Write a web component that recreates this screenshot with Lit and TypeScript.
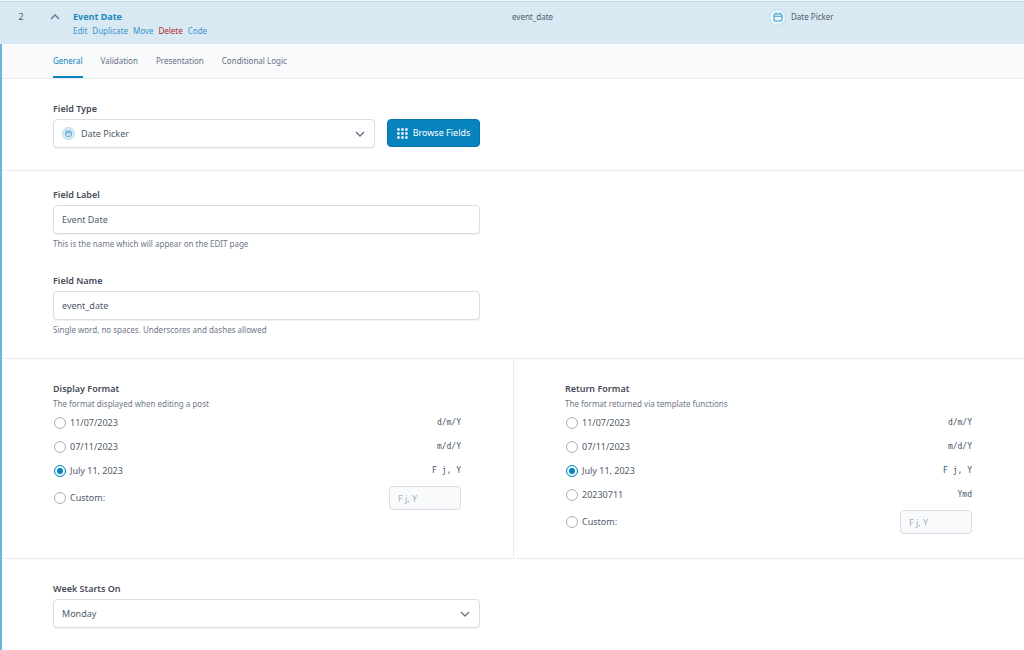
import { LitElement, html, svg, css } from "lit";
import { customElement, property, state } from "lit/decorators.js";

const calendar = svg`<path d="M4.500 4h11A2.500 2.500 0 0 1 18 6.500v9a2.500 2.500 0 0 1-2.500 2.500h-11A2.500 2.500 0 0 1 2 15.500v-9A2.500 2.500 0 0 1 4.500 4zM2 8.500h16M6 1v4M14 1v4" fill="none" stroke="currentColor" stroke-width="2.200"/>`;

@customElement("field-icon")
export class FieldIcon extends LitElement {
  static styles = css`
    :host {
      display: grid;
      place-items: center;
      box-sizing: border-box;
      width: 17px;
      height: 17px;
      border: 1px solid #b5dcec;
      border-radius: 50%;
      background: #ebf5fa;
      color: #3a9ccb;
    }
    :host([small]) {
      width: 13px;
      height: 13px;
      background: #d8ebf5;
    }
    svg {
      display: block;
      width: 10px;
      height: 10px;
    }
    :host([small]) svg {
      width: 7px;
      height: 7px;
    }
  `;

  render() {
    return html`<svg viewBox="0 0 20 20" aria-hidden="true">${calendar}</svg>`;
  }
}

interface FormatOption {
  label: string;
  code: string;
}

@customElement("format-group")
export class FormatGroup extends LitElement {
  @property() heading = "";
  @property() hint = "";
  @property() name = "";
  @property({ attribute: false }) options: FormatOption[] = [];
  @state() private selected = "F j, Y";

  static styles = css`
    :host {
      display: block;
    }
    fieldset {
      margin: 0;
      padding: 0;
      border: 0;
      min-width: 0;
    }
    legend {
      padding: 0;
      font-weight: 600;
      line-height: 14px;
      color: #474b57;
    }
    .hint {
      margin: 0;
      padding: 1px 0 0;
      font-size: 8px;
      line-height: 14px;
      color: #6f7888;
    }
    .list {
      display: grid;
      margin: 0;
      padding: 0;
      list-style: none;
    }
    .row {
      display: flex;
      align-items: center;
      height: 24px;
    }
    .custom {
      margin-top: 3px;
    }
    .choice {
      display: flex;
      flex: 1;
      align-items: center;
      gap: 4px;
    }
    .radio {
      appearance: none;
      display: grid;
      place-items: center;
      box-sizing: border-box;
      width: 12px;
      height: 12px;
      margin: 0 0 0 1px;
      border: 1px solid #a8b0bd;
      border-radius: 50%;
      background: #fff;
    }
    .radio:checked {
      border-color: #0783be;
      background: #ebf5fa;
    }
    .radio:checked::before {
      content: "";
      width: 6px;
      height: 6px;
      border-radius: 50%;
      background: #0783be;
    }
    .code {
      font-family: "DejaVu Sans Mono", monospace;
      font-size: 8px;
      color: #475467;
    }
    .text {
      box-sizing: border-box;
      width: 72px;
      height: 24px;
      padding: 0 8px;
      border: 1px solid #d8dde6;
      border-radius: 4px;
      background: #f9fafb;
      font: inherit;
      color: #a5aebd;
    }
  `;

  render() {
    return html`
      <fieldset>
        <legend>${this.heading}</legend>
        <p class="hint">${this.hint}</p>
        <ul class="list">
          ${this.options.map(
            (o) => html`<li class="row">
              <label class="choice">
                <input
                  class="radio"
                  type="radio"
                  name=${this.name}
                  .checked=${this.selected === o.code}
                  @change=${() => (this.selected = o.code)}
                />
                ${o.label}
              </label>
              <code class="code">${o.code}</code>
            </li>`
          )}
          <li class="row custom">
            <label class="choice">
              <input
                class="radio"
                type="radio"
                name=${this.name}
                .checked=${this.selected === "custom"}
                @change=${() => (this.selected = "custom")}
              />
              Custom:
            </label>
            <input
              class="text"
              type="text"
              aria-label="Custom format"
              .value=${"F j, Y"}
              ?disabled=${this.selected !== "custom"}
            />
          </li>
        </ul>
      </fieldset>
    `;
  }
}

@customElement("app-root")
export class AppRoot extends LitElement {
  @state() private tab = "General";

  static styles = css`
    :host {
      display: flex;
      flex-direction: column;
      box-sizing: border-box;
      min-height: 100vh;
      padding-top: 1px;
      background: #eef5fa;
      font-family: "Noto Sans", "Open Sans", sans-serif;
      font-size: 9px;
      line-height: 14px;
      color: #515a6b;
    }
    a {
      color: #3a94c8;
      text-decoration: none;
    }
    .head {
      display: grid;
      grid-template-columns: 2fr 1fr 1fr;
      align-items: start;
      padding: 8px 0 6px;
      border-top: 1px solid #b8dcea;
      background: #d8e9f3;
      font-size: 8px;
    }
    .lead {
      display: grid;
      grid-template-columns: 42px 31px 1fr;
    }
    .order {
      font-size: 9px;
      text-align: center;
    }
    .toggle {
      display: block;
      height: 14px;
      margin: 0;
      padding: 0 0 0 8px;
      border: 0;
      background: none;
      text-align: left;
      color: #667085;
    }
    .chevron {
      display: block;
      width: 10px;
      height: 10px;
      fill: none;
      stroke: currentColor;
      stroke-width: 1.300;
    }
    .title {
      display: block;
      font-size: 9px;
      font-weight: 700;
      color: #1c88be;
    }
    .actions {
      display: flex;
      gap: 5px;
    }
    .actions .delete {
      color: #b3262e;
    }
    .type {
      display: flex;
      align-items: center;
      gap: 5px;
      height: 14px;
      padding-left: 1px;
    }
    .body {
      flex: 1;
      border-left: 2px solid #6bb5d8;
      background: #fff;
    }
    .tabs {
      display: flex;
      gap: 18px;
      padding: 0 51px;
      border-bottom: 1px solid #eaecf0;
      background: #f9fafb;
    }
    .tab {
      height: 34px;
      margin: 0;
      padding: 1px 0 0;
      border: 0;
      border-bottom: 2px solid transparent;
      background: none;
      font: inherit;
      font-size: 8px;
      color: #667085;
    }
    .tab[aria-selected="true"] {
      border-color: #0783be;
      color: #0783be;
    }
    .section {
      display: flex;
      flex-direction: column;
      gap: 23px;
      padding: 23px 51px 22px;
    }
    .section + .section,
    .split,
    .split + .section {
      border-top: 1px solid #eaecf0;
    }
    .names {
      padding: 17px 51px 21px;
    }
    .field {
      display: flex;
      flex-direction: column;
      max-width: 427px;
    }
    .label {
      margin-bottom: 3px;
      font-weight: 600;
      color: #474b57;
    }
    .pair {
      display: flex;
      gap: 12px;
    }
    .control {
      display: grid;
      flex: 1;
      align-items: center;
    }
    .control > * {
      grid-area: 1 / 1;
    }
    .input {
      box-sizing: border-box;
      width: 100%;
      height: 29px;
      margin: 0;
      padding: 0 8px;
      border: 1px solid #d8dde6;
      border-radius: 4px;
      background: #fff;
      box-shadow: 0 1px 1px rgba(16, 24, 40, 0.06);
      font: inherit;
      color: #515a6b;
      appearance: none;
    }
    .with-icon {
      padding-left: 27px;
    }
    .mark,
    .arrow {
      z-index: 1;
      pointer-events: none;
    }
    .mark {
      margin-left: 9px;
    }
    .arrow {
      justify-self: end;
      margin-right: 10px;
      color: #667085;
    }
    .browse {
      display: flex;
      align-items: center;
      justify-content: center;
      gap: 5px;
      width: 93px;
      height: 28px;
      margin: 0;
      padding: 0;
      border: 1px solid #0675aa;
      border-radius: 4px;
      background: #0783be;
      font: inherit;
      color: #fff;
    }
    .dots {
      width: 11px;
      height: 11px;
      fill: currentColor;
    }
    .note {
      margin: 3px 0 0;
      font-size: 8px;
      line-height: 14px;
      color: #6f7888;
    }
    .split {
      display: grid;
      grid-template-columns: 1fr 1fr;
    }
    .half {
      padding: 23px 52px 24px 51px;
    }
    .half + .half {
      border-left: 1px solid #eaecf0;
    }
  `;

  private down() {
    return html`<svg class="chevron arrow" viewBox="0 0 10 10" aria-hidden="true">
      <path d="M1 3l4 4 4-4" />
    </svg>`;
  }

  private textField(id: string, label: string, value: string, note: string) {
    return html`<div class="field">
      <label class="label" for=${id}>${label}</label>
      <input class="input" id=${id} type="text" .value=${value} />
      <p class="note">${note}</p>
    </div>`;
  }

  render() {
    const formats: FormatOption[] = [
      { label: "11/07/2023", code: "d/m/Y" },
      { label: "07/11/2023", code: "m/d/Y" },
      { label: "July 11, 2023", code: "F j, Y" },
    ];
    const dots = [0, 4, 8];
    return html`
      <header class="head">
        <div class="lead">
          <span class="order">2</span>
          <button class="toggle" aria-label="Collapse field">
            <svg class="chevron" viewBox="0 0 10 10" aria-hidden="true"><path d="M1 7l4-4 4 4" /></svg>
          </button>
          <div>
            <a class="title" href="#">Event Date</a>
            <nav class="actions">
              <a href="#">Edit</a>
              <a href="#">Duplicate</a>
              <a href="#">Move</a>
              <a class="delete" href="#">Delete</a>
              <a href="#">Code</a>
            </nav>
          </div>
        </div>
        <span>event_date</span>
        <span class="type"><field-icon></field-icon>Date Picker</span>
      </header>
      <main class="body">
        <div class="tabs" role="tablist">
          ${["General", "Validation", "Presentation", "Conditional Logic"].map(
            (t) => html`<button
              class="tab"
              role="tab"
              aria-selected=${this.tab === t ? "true" : "false"}
              @click=${() => (this.tab = t)}
            >${t}</button>`
          )}
        </div>
        <section class="section">
          <div class="field">
            <label class="label" for="type">Field Type</label>
            <div class="pair">
              <div class="control">
                <select class="input with-icon" id="type"><option>Date Picker</option></select>
                <field-icon class="mark" small></field-icon>
                ${this.down()}
              </div>
              <button class="browse">
                <svg class="dots" viewBox="0 0 11 11" aria-hidden="true">
                  ${dots.map((y) => dots.map((x) => svg`<rect x=${x + 0.2} y=${y + 0.2} width="2.500" height="2.500" rx="0.600" />`))}
                </svg>
                Browse Fields
              </button>
            </div>
          </div>
        </section>
        <section class="section names">
          ${this.textField("label", "Field Label", "Event Date", "This is the name which will appear on the EDIT page")}
          ${this.textField("name", "Field Name", "event_date", "Single word, no spaces. Underscores and dashes allowed")}
        </section>
        <div class="split">
          <format-group
            class="half"
            name="display"
            heading="Display Format"
            hint="The format displayed when editing a post"
            .options=${formats}
          ></format-group>
          <format-group
            class="half"
            name="return"
            heading="Return Format"
            hint="The format returned via template functions"
            .options=${[...formats, { label: "20230711", code: "Ymd" }]}
          ></format-group>
        </div>
        <section class="section">
          <div class="field">
            <label class="label" for="week">Week Starts On</label>
            <div class="control">
              <select class="input" id="week"><option>Monday</option></select>
              ${this.down()}
            </div>
          </div>
        </section>
      </main>
    `;
  }
}
